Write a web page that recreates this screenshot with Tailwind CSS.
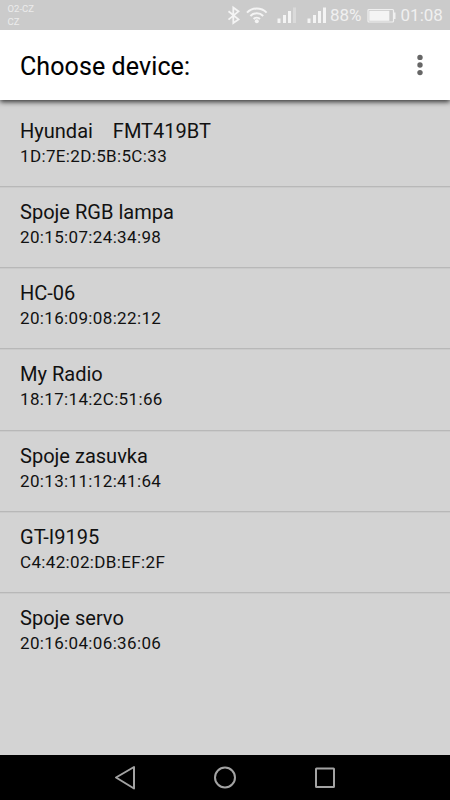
<!DOCTYPE html>
<html lang="en">
<head>
  <meta charset="UTF-8">
  <title>Choose device</title>
  <script src="https://cdn.jsdelivr.net/npm/@tailwindcss/browser@4"></script>
</head>
<body class="flex flex-col w-[450px] h-[800px] overflow-hidden bg-[#d3d3d3] font-['Roboto',sans-serif] text-[#111]">

<!-- Status Bar -->
<div class="flex justify-between h-[30px] shrink-0 bg-[#cbcbcb] text-[#f0f0f0]">
  <div class="pl-[7.500px] pt-[2px] text-[9.500px] leading-[13px] text-[#ececec]">
    <p>O2-CZ</p>
    <p>CZ</p>
  </div>
  <svg class="w-[120px] h-[30px] ml-auto" viewBox="215 0 120 30" fill="none" stroke="#f4f4f4">
    <path d="M228.500 11.200l10 8.200-5.200 3.600V7.600l5.200 3.800-10 8.200" stroke-width="1.800"/>
    <path d="M247 12.600a14 14 0 0 1 19.600 0M250.400 16a9 9 0 0 1 12.800 0M253.600 19a4.600 4.600 0 0 1 6.400 0" stroke-width="2"/>
    <circle cx="256.800" cy="21.200" r="2" fill="#f4f4f4" stroke="none"/>
    <path d="M279 23v-4.500M284.500 23v-8M289.500 23v-12M309 23v-4.500M314.500 23v-8M319.500 23v-12M324.500 23V7.500" stroke-width="3"/>
    <path d="M294.500 23V7.500" stroke="#dadada" stroke-width="3"/>
  </svg>
  <div class="flex items-center h-[31px] w-[120px] text-[17px] -ml-[5px] pt-px">
    <span>88%</span>
    <svg class="w-[29px] h-[16px] ml-[5px] mb-px shrink-0" viewBox="0 0 29 16">
      <rect x="1" y="1.500" width="25.500" height="12.500" rx="1" fill="none" stroke="#f0f0f0" stroke-width="1.200"/>
      <rect x="2.300" y="2.800" width="20" height="10" fill="#f4f4f4"/>
      <rect x="26.500" y="4.500" width="2" height="6.500" fill="#f0f0f0"/>
    </svg>
    <span class="ml-[5px]">01:08</span>
  </div>
</div>

<!-- Title Bar -->
<div class="flex items-center justify-between h-[70px] shrink-0 pl-5 pr-[27px] pt-[3px] bg-white shadow-[0_2px_5px_0_rgba(0,0,0,0.75)] [clip-path:inset(0_0_-10px_0)]">
  <h1 class="text-[25px] tracking-[0.1px] text-black [-webkit-text-stroke:0.100px_black]">Choose device:</h1>
  <svg class="w-[6px] h-[22px] mb-[4px]" viewBox="0 0 6 22" fill="#666">
    <circle cx="3" cy="3.400" r="2.700"/>
    <circle cx="3" cy="11" r="2.700"/>
    <circle cx="3" cy="18.600" r="2.700"/>
  </svg>
</div>

<!-- Device List -->
<ul id="devices" class="grow pt-[5.500px]"></ul>

<!-- Navigation Bar -->
<div class="h-[45px] shrink-0 bg-black">
  <svg class="w-full h-full" viewBox="0 755 450 45" fill="none" stroke="#a3a3a3" stroke-width="2">
    <path d="M134 767v21.500l-18-11z" stroke-linejoin="round"/>
    <circle cx="225" cy="777.500" r="10"/>
    <rect x="316" y="768.500" width="18" height="18.500" rx="0.500"/>
  </svg>
</div>

<script>
const devices = [
  ["Hyundai    FMT419BT", "1D:7E:2D:5B:5C:33"],
  ["Spoje RGB lampa", "20:15:07:24:34:98"],
  ["HC-06", "20:16:09:08:22:12"],
  ["My Radio", "18:17:14:2C:51:66"],
  ["Spoje zasuvka", "20:13:11:12:41:64"],
  ["GT-I9195", "C4:42:02:DB:EF:2F"],
  ["Spoje servo", "20:16:04:06:36:06"]
];

document.getElementById('devices').innerHTML = devices.map(([name, address], i) => `
  <li class="h-[81.330px] pl-5 pt-[12px] ${i < devices.length - 1 ? 'border-b border-[#b8b8b8] shadow-[0_1px_0_#cacaca]' : ''}">
    <p class="whitespace-pre text-[20.050px] leading-[27px]">${name}</p>
    <p class="text-[17px] tracking-[0.350px] leading-[23px]">${address}</p>
  </li>
`).join('');
</script>
</body>
</html>
